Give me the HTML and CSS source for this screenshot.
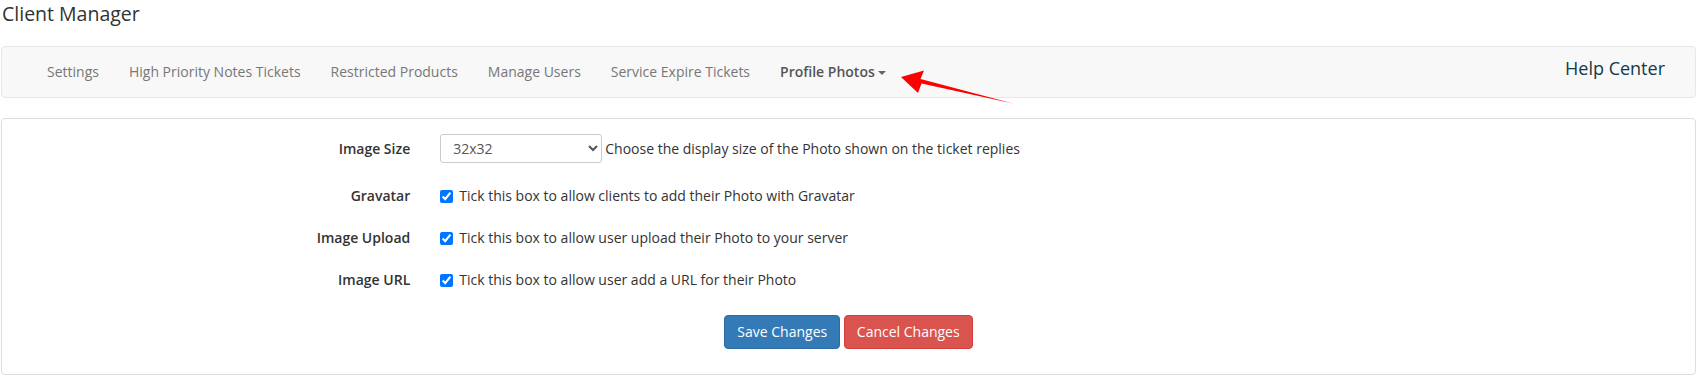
FILE: index.html
```html
<!DOCTYPE html>
<html lang="en">
<head>
  <meta charset="UTF-8" />
  <title>Client Manager</title>
  <link rel="stylesheet" href="styles.css">
</head>
<body>
  <h1 class="page-title">Client Manager</h1>

  <nav class="navbar">
    <ul class="nav-links">
      <li><a href="#">Settings</a></li>
      <li><a href="#">High Priority Notes Tickets</a></li>
      <li><a href="#">Restricted Products</a></li>
      <li><a href="#">Manage Users</a></li>
      <li><a href="#">Service Expire Tickets</a></li>
      <li class="active"><a href="#">Profile Photos<span class="caret"></span></a></li>
    </ul>
    <a href="#" class="brand">Help Center</a>
  </nav>

  <div class="panel">
    <form class="form">
      <div class="form-row size-row">
        <label class="form-label" for="image-size">Image Size</label>
        <div class="form-control">
          <select id="image-size" class="select">
            <option>32x32</option>
            <option>48x48</option>
            <option>64x64</option>
          </select>
          <span>Choose the display size of the Photo shown on the ticket replies</span>
        </div>
      </div>
      <div class="form-row">
        <span class="form-label">Gravatar</span>
        <label class="form-control"><input type="checkbox" checked /><span>Tick this box to allow clients to add their Photo with Gravatar</span></label>
      </div>
      <div class="form-row">
        <span class="form-label">Image Upload</span>
        <label class="form-control"><input type="checkbox" checked /><span>Tick this box to allow user upload their Photo to your server</span></label>
      </div>
      <div class="form-row">
        <span class="form-label">Image URL</span>
        <label class="form-control"><input type="checkbox" checked /><span>Tick this box to allow user add a URL for their Photo</span></label>
      </div>
    </form>
    <div class="actions">
      <button class="btn btn-primary">Save Changes</button>
      <button class="btn btn-danger">Cancel Changes</button>
    </div>
  </div>

  <!-- annotation arrow pointing at the menu item -->
  <svg class="arrow" width="1706" height="378" viewBox="0 0 1706 378">
    <polygon fill="#ff0000" points="901,77 924,70.5 920.5,79 1013,103.5 921.5,83.5 918,93" />
  </svg>
</body>
</html>
```

FILE: styles.css
```css
body {
  margin: 0;
  position: relative;
  font-family: 'Open Sans', 'Liberation Sans', sans-serif;
  font-size: 14px;
  line-height: 20px;
  color: #333;
  background: #fff;
}
.page-title {
  margin: 0;
  padding-left: 2px;
  font-size: 19.5px;
  font-weight: 400;
  line-height: 27px;
  color: #333;
}

.navbar {
  display: flex;
  justify-content: space-between;
  align-items: flex-start;
  margin: 19px 10px 0 1px;
  padding: 0 30px;
  background: #f8f8f8;
  border: 1px solid #e7e7e7;
  border-radius: 4px;
}
.nav-links {
  display: flex;
  list-style: none;
  margin: 0;
  padding: 0;
}
.nav-links a {
  display: block;
  padding: 15px;
  color: #777;
  text-decoration: none;
}
.nav-links .active a { color: #555; font-weight: 600; }
.caret {
  display: inline-block;
  width: 0;
  height: 0;
  margin-left: 3px;
  vertical-align: middle;
  border-top: 4px solid #666;
  border-left: 4px solid transparent;
  border-right: 4px solid transparent;
}
.brand {
  padding: 11px 0 0;
  font-size: 18px;
  line-height: 20px;
  color: #113a4a;
  text-decoration: none;
}

.panel {
  margin: 20px 10px 0 1px;
  padding: 15px;
  border: 1px solid #ddd;
  border-radius: 4px;
}
.form { margin: 0 -15px; }
.form-row {
  display: grid;
  grid-template-columns: 25% 75%;
  align-items: center;
  min-height: 34px;
  margin-bottom: 8px;
}
.form-row.size-row { min-height: 29px; margin-bottom: 16px; }
.form-label {
  padding-right: 15px;
  text-align: right;
  font-weight: 600;
}
.form-control {
  display: flex;
  align-items: center;
  gap: 3px;
  padding-left: 15px;
}
.select {
  width: 162px;
  height: 29px;
  padding: 0 8px;
  font-family: inherit;
  font-size: 14px;
  color: #555;
  background: #fff;
  border: 1px solid #ccc;
  border-radius: 3px;
}
.form-control input[type="checkbox"] {
  width: 13px;
  height: 13px;
  margin: 0 3px 0 0;
}

.actions {
  margin: 18px 0 10px;
  text-align: center;
}
.btn {
  padding: 6px 12px;
  font-family: inherit;
  font-size: 14px;
  line-height: 20px;
  color: #fff;
  border: 1px solid transparent;
  border-radius: 4px;
  cursor: pointer;
}
.btn-primary { background: #337ab7; border-color: #2e6da4; }
.btn-danger { background: #d9534f; border-color: #d43f3a; }

.arrow {
  position: absolute;
  left: 0;
  top: 0;
  pointer-events: none;
}
```
